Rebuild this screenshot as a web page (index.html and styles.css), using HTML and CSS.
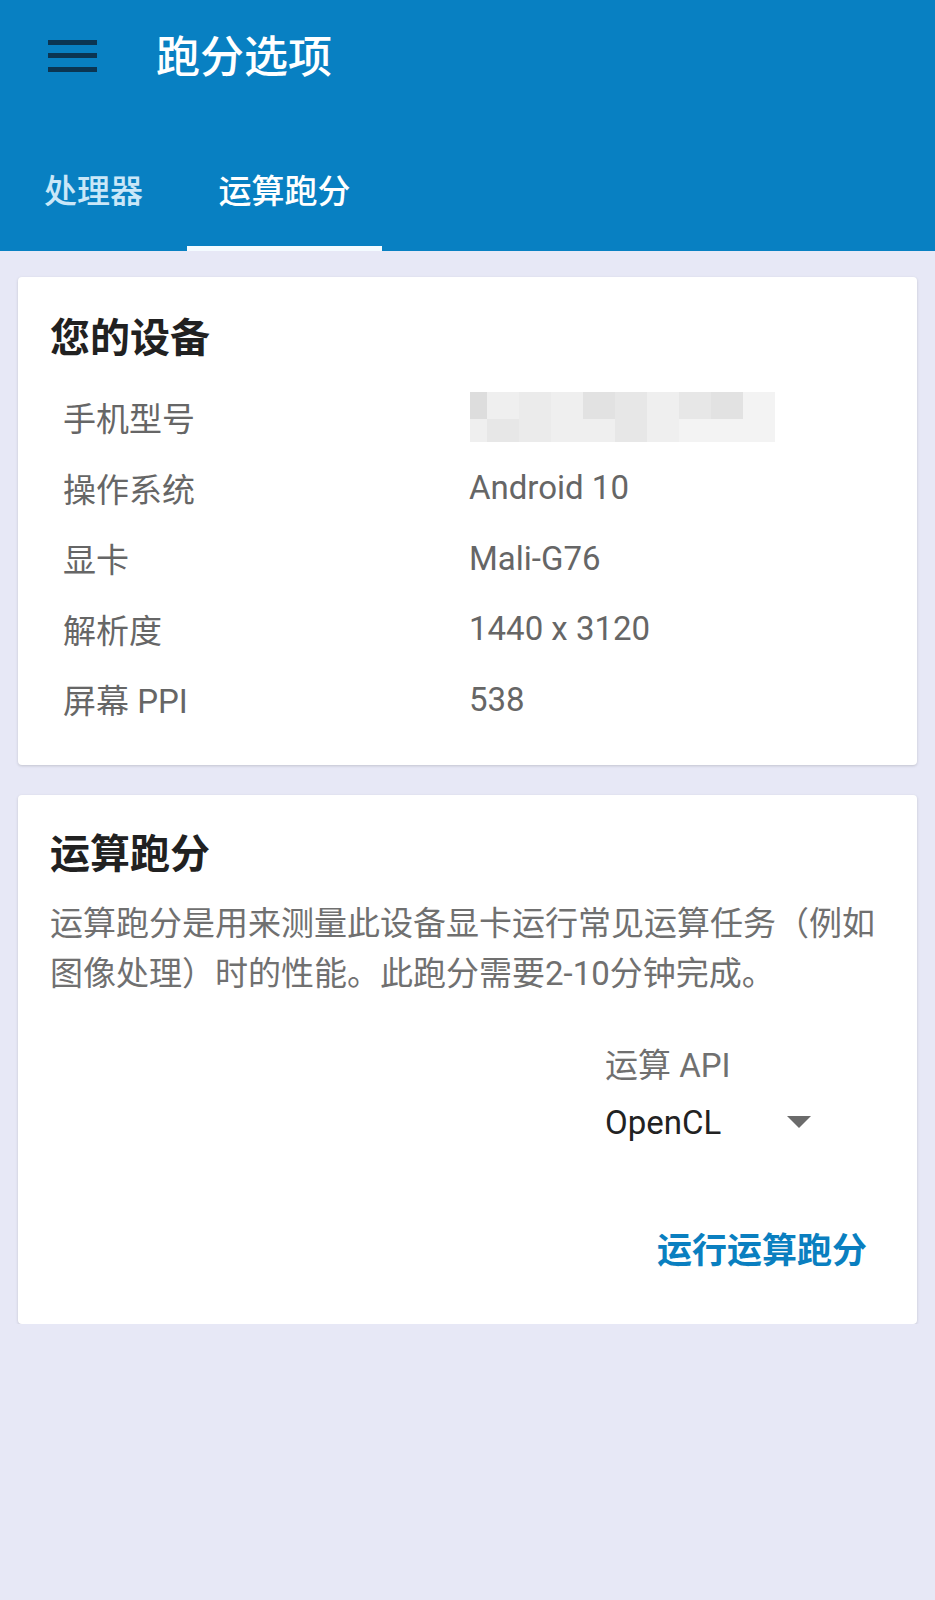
FILE: index.html
```html
<!DOCTYPE html>
<html lang="zh-CN">
<head>
    <meta charset="UTF-8">
    <title>跑分选项</title>
    <link rel="stylesheet" href="styles.css">
</head>
<body>

    <!-- 顶栏 -->
    <div class="header">
        <div class="toolbar">
            <div class="menu-btn">
                <svg width="49" height="37" viewBox="0 0 49 37">
                    <rect x="0" y="0" width="49" height="5" fill="#0b3552"></rect>
                    <rect x="0" y="13" width="49" height="5" fill="#0b3552"></rect>
                    <rect x="0" y="27" width="49" height="5" fill="#0b3552"></rect>
                </svg>
            </div>
            <div class="title">跑分选项</div>
        </div>
        <div class="tabs">
            <div class="tab tab-cpu">处理器</div>
            <div class="tab tab-compute active">运算跑分</div>
        </div>
    </div>

    <!-- 设备信息 -->
    <div class="card">
        <h2 class="card-title">您的设备</h2>
        <div class="info-table">
            <div class="info-label">手机型号</div>
            <div class="info-value">
                <div class="blurred">
                    <span class="g1"></span><span class="g5"></span><span class="g4"></span><span class="g5"></span><span class="g2"></span>
                    <span class="g3"></span><span class="g5"></span><span class="g3"></span><span class="g2"></span><span class="g6"></span>
                    <span class="g5"></span><span class="g3"></span><span class="g4"></span><span class="g5"></span><span class="g5"></span>
                    <span class="g3"></span><span class="g5"></span><span class="g6"></span><span class="g6"></span><span class="g6"></span>
                </div>
            </div>
            <div class="info-label">操作系统</div>
            <div class="info-value">Android 10</div>
            <div class="info-label">显卡</div>
            <div class="info-value">Mali-G76</div>
            <div class="info-label">解析度</div>
            <div class="info-value">1440 x 3120</div>
            <div class="info-label">屏幕 PPI</div>
            <div class="info-value">538</div>
        </div>
    </div>

    <!-- 运算跑分 -->
    <div class="card card-compute">
        <h2 class="card-title">运算跑分</h2>
        <p class="desc">运算跑分是用来测量此设备显卡运行常见运算任务（例如图像处理）时的性能。此跑分需要2-10分钟完成。</p>
        <div class="api-row">
            <div class="api-box">
                <div class="api-label">运算 API</div>
                <div class="api-select">
                    <span>OpenCL</span>
                    <span class="arrow"></span>
                </div>
            </div>
        </div>
        <div class="actions">
            <button class="run-btn">运行运算跑分</button>
        </div>
    </div>

</body>
</html>
```

FILE: styles.css
```css
/* 基本 */
body {
    margin: 0;
    padding: 0;
    background-color: #e7e8f6;
    font-family: Roboto, "Noto Sans CJK SC", sans-serif;
}

/* 顶栏 */
.header {
    background-color: #0880c2;
    height: 251px;
}

.toolbar {
    height: 112px;
    display: flex;
    align-items: center;
}

.menu-btn {
    width: 49px;
    height: 32px;
    margin-left: 48px;
    margin-top: -1px;
}

.menu-btn svg {
    display: block;
}

.title {
    margin-left: 59px;
    margin-top: 4px;
    color: #ffffff;
    font-size: 44px;
    font-weight: 500;
    line-height: 50px;
}

.tabs {
    display: flex;
    height: 139px;
}

.tab {
    box-sizing: border-box;
    height: 139px;
    padding-top: 20px;
    display: flex;
    align-items: center;
    justify-content: center;
    font-size: 33px;
    font-weight: 500;
    color: #c9e7f8;
    border-bottom: 5px solid transparent;
}

.tab-cpu {
    width: 187px;
}

.tab-compute {
    width: 195px;
}

.tab.active {
    color: #ffffff;
    border-bottom-color: #f4fbff;
}

/* 卡片 */
.card {
    background-color: #ffffff;
    margin: 26px 18px 0;
    padding: 39px 32px 30px;
    border-radius: 4px;
    box-shadow: 0 1px 3px rgba(0, 0, 0, 0.16);
}

.card-title {
    margin: 0;
    font-size: 40px;
    line-height: 46px;
    font-weight: bold;
    color: #212121;
}

.info-table {
    margin-top: 20px;
    display: grid;
    grid-template-columns: 406px 1fr;
    grid-auto-rows: 70.5px;
    padding-left: 13px;
}

.info-label,
.info-value {
    display: flex;
    align-items: center;
    font-size: 33px;
    color: #666666;
}

.blurred {
    display: grid;
    grid-template-columns: 17px repeat(9, 32px);
    grid-template-rows: 27px 23px;
    width: 308px;
    margin-left: 1px;
}

.g1 { background-color: #dddddd; }
.g2 { background-color: #e2e2e2; }
.g3 { background-color: #e7e7e7; }
.g4 { background-color: #ebebeb; }
.g5 { background-color: #efefef; }
.g6 { background-color: #f3f3f3; }

/* 运算跑分卡片 */
.card-compute {
    margin-top: 30px;
    padding-top: 37px;
    padding-bottom: 47px;
}

.desc {
    margin: 21px 0 0;
    font-size: 33px;
    line-height: 50px;
    color: #707070;
}

.api-row {
    display: flex;
    justify-content: flex-end;
    padding-right: 74px;
    margin-top: 42px;
}

.api-box {
    width: 206px;
}

.api-label {
    font-size: 33px;
    line-height: 50px;
    color: #707070;
}

.api-select {
    margin-top: 7px;
    display: flex;
    align-items: center;
    justify-content: space-between;
    font-size: 33px;
    line-height: 50px;
    color: #222222;
}

.arrow {
    width: 0;
    height: 0;
    border-left: 12.5px solid transparent;
    border-right: 12.5px solid transparent;
    border-top: 12px solid #6b6b6b;
    margin-top: -2px;
}

.actions {
    display: flex;
    justify-content: flex-end;
    margin-top: 79px;
}

.run-btn {
    background: none;
    border: none;
    padding: 0 18px 0 0;
    font-family: Roboto, "Noto Sans CJK SC", sans-serif;
    font-size: 35px;
    line-height: 50px;
    font-weight: bold;
    color: #0a7fc0;
    cursor: pointer;
}
```
